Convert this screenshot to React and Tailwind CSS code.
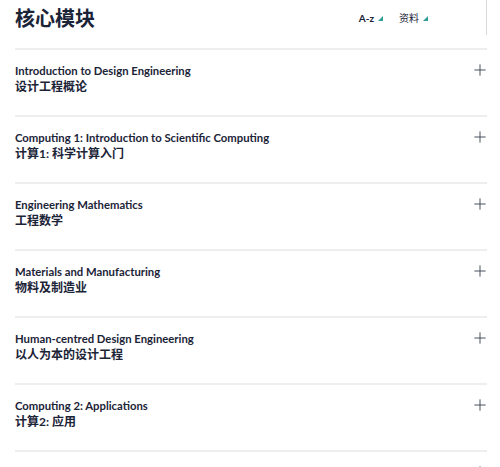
import { Plus } from 'lucide-react'

const modules = [
  { en: 'Introduction to Design Engineering', zh: '设计工程概论' },
  { en: 'Computing 1: Introduction to Scientific Computing', zh: '计算1: 科学计算入门' },
  { en: 'Engineering Mathematics', zh: '工程数学' },
  { en: 'Materials and Manufacturing', zh: '物料及制造业' },
  { en: 'Human-centred Design Engineering', zh: '以人为本的设计工程' },
  { en: 'Computing 2: Applications', zh: '计算2: 应用' },
  { en: 'Engineering Analysis', zh: '工程分析' },
]

const font = { fontFamily: '"Source Sans Pro", Lato, "Noto Sans CJK SC", sans-serif' }

const Tri = () => (
  <span className="inline-block w-0 h-0 ml-[4px] border-l-[5px] border-l-transparent border-b-[5px] border-b-[#2f9e95]" />
)

export default function App() {
  return (
    <div className="w-[500px] h-[467px] overflow-hidden bg-white text-[#1b2437]" style={font}>
      <div className="ml-[15px] w-[472px]">
        {/* Header */}
        <div className="flex items-start h-[48px]">
          <h1 className="pt-[5px] text-[20px] leading-[26px] font-bold flex-1">核心模块</h1>
          <div className="flex items-center pt-[11px] text-[10px] font-bold leading-[14px]">
            <span className="flex items-center">A-z<Tri /></span>
            <span className="flex items-center ml-[16px] font-normal">资料<Tri /></span>
          </div>
          <div className="w-[59px] h-[35px] border-r border-[#d8d8d8]" />
        </div>

        {/* Modules */}
        {modules.map((m) => (
          <div key={m.en}>
            <div className="h-[2px] bg-[#eeeeee]" />
            <div className="h-[65px] flex items-start pt-[13px]">
              <div className="flex-1">
                <p className="text-[11.3px] font-bold leading-[16px]">{m.en}</p>
                <p className="text-[12px] font-bold leading-[16px]">{m.zh}</p>
              </div>
              <Plus className="w-[18px] h-[18px] mt-[-2px] mr-[-2px] text-[#444c5a]" strokeWidth={1.3} />
            </div>
          </div>
        ))}
      </div>
    </div>
  )
}
